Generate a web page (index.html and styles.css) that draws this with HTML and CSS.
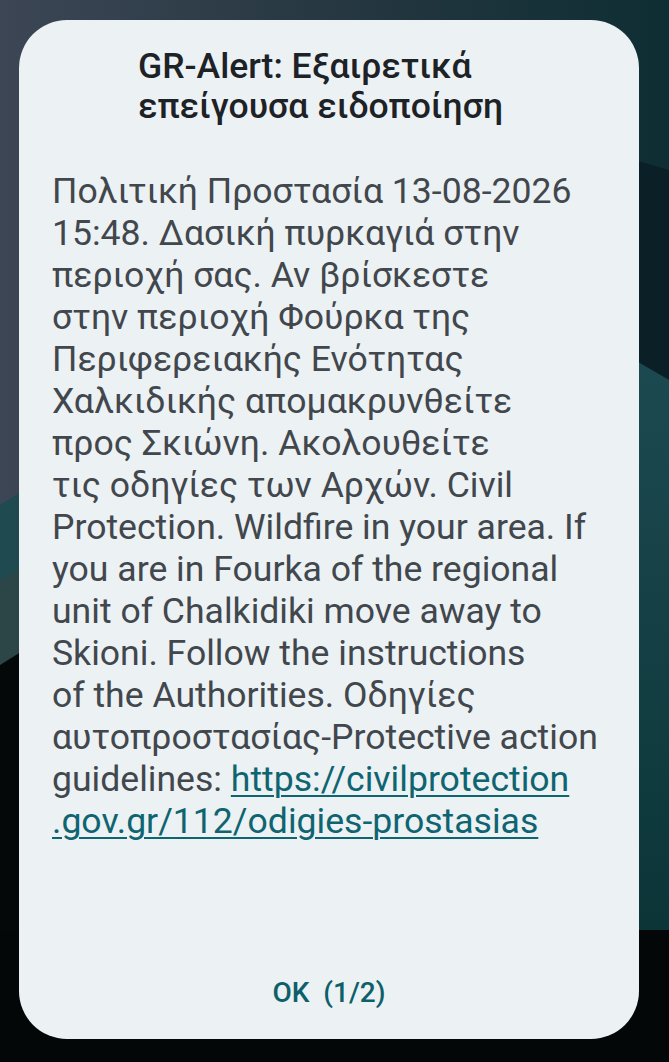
FILE: index.html
```
<!DOCTYPE html>
<html lang="el">
<head>
    <meta charset="UTF-8">
    <meta name="viewport" content="width=device-width, initial-scale=1.0">
    <title>GR-Alert</title>
    <link rel="stylesheet" href="styles.css">
</head>
<body>

<svg class="wallpaper" viewBox="0 0 669 1062" preserveAspectRatio="none" aria-hidden="true">
    <defs>
        <linearGradient id="sky" x1="0" y1="0" x2="1" y2="0">
            <stop offset="0" stop-color="#3c4655"/>
            <stop offset="0.55" stop-color="#24363f"/>
            <stop offset="1" stop-color="#0e2e33"/>
        </linearGradient>
        <linearGradient id="waveRight" x1="0" y1="0" x2="0" y2="1">
            <stop offset="0" stop-color="#1d4a52"/>
            <stop offset="1" stop-color="#0b3537"/>
        </linearGradient>
    </defs>
    <rect width="669" height="1062" fill="url(#sky)"/>
    <polygon points="600,150 669,170 669,380 600,340" fill="#0a1f26"/>
    <polygon points="600,340 669,380 669,930 600,930" fill="url(#waveRight)"/>
    <polygon points="0,505 40,480 40,560 0,580" fill="#1e4a50"/>
    <polygon points="0,580 40,560 40,640 0,665" fill="#2c4648"/>
    <polygon points="0,665 40,640 40,1062 0,1062" fill="#050808"/>
    <rect x="0" y="930" width="669" height="132" fill="#040707"/>
</svg>

<div class="dialog">
    <h1 class="dialog-title">GR-Alert: Εξαιρετικά<br>επείγουσα ειδοποίηση</h1>
    <p class="dialog-body">Πολιτική Προστασία 13-08-2026<br>15:48. Δασική πυρκαγιά στην<br>περιοχή σας. Αν βρίσκεστε<br>στην περιοχή Φούρκα της<br>Περιφερειακής Ενότητας<br>Χαλκιδικής απομακρυνθείτε<br>προς Σκιώνη. Ακολουθείτε<br>τις οδηγίες των Αρχών. Civil<br>Protection. Wildfire in your area. If<br>you are in Fourka of the regional<br>unit of Chalkidiki move away to<br>Skioni. Follow the instructions<br>of the Authorities. Οδηγίες<br>αυτοπροστασίας-Protective action<br>guidelines: <a href="#" class="link">https://civilprotection<br>.gov.gr/112/odigies-prostasias</a></p>
    <div class="dialog-actions">
        <button class="ok-button">OK&nbsp; (1/2)</button>
    </div>
</div>

</body>
</html>
```
FILE: styles.css
```
body {
    margin: 0;
    height: 1062px;
    box-sizing: border-box;
    padding: 20px 30px 23px 19px;
    display: flex;
    flex-direction: column;
    font-family: Roboto, "Noto Sans", sans-serif;
    background: #040707;
    overflow: hidden;
}
.wallpaper {
    position: fixed;
    top: 0;
    left: 0;
    width: 669px;
    height: 1062px;
    z-index: -1;
}
.dialog {
    flex: 1;
    display: flex;
    flex-direction: column;
    background: #ecf1f4;
    border-radius: 48px;
    padding: 26px 0 30px;
}
.dialog-title {
    margin: 0;
    padding-left: 119px;
    font-size: 35.5px;
    font-weight: 500;
    line-height: 40px;
    color: #1d2226;
}
.dialog-body {
    margin: 44px 0 0;
    padding-left: 33px;
    font-size: 35.6px;
    line-height: 42px;
    color: #41474c;
}
.link {
    color: #0e6470;
    text-decoration: underline;
    text-decoration-thickness: 2px;
    text-underline-offset: 4px;
}
.dialog-actions {
    margin-top: auto;
    display: flex;
    justify-content: center;
}
.ok-button {
    border: none;
    background: none;
    padding: 0;
    font-family: Roboto, sans-serif;
    font-size: 28px;
    font-weight: 500;
    line-height: 32px;
    color: #0d5f6a;
    white-space: pre;
}
```
